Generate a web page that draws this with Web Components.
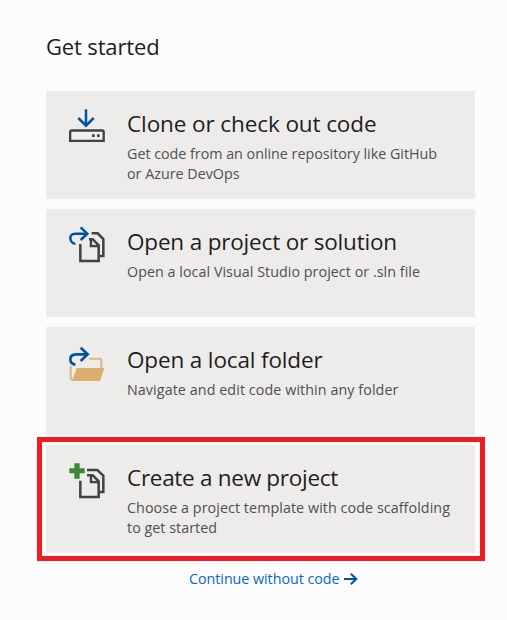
<!DOCTYPE html>
<html lang="en">
<head>
<meta charset="utf-8">
<title>Get started</title>
<style>
html,body{margin:0;background:#fcfcfc;font-family:"Open Sans","Noto Sans",sans-serif;color:#1e1e1e}
body{width:507px;height:620px;overflow:hidden}
</style>
</head>
<body>
<start-page></start-page>
<script>
/* One line of text whose letter spacing is adjusted to span a given width. */
class FitLine extends HTMLElement{
  connectedCallback(){
    const root=this.attachShadow({mode:'open'});
    root.innerHTML='<style>:host{display:block;white-space:nowrap}span{display:inline-block}</style><span><slot></slot></span>';
    const span=root.querySelector('span');
    const w=parseFloat(this.getAttribute('width'));
    const n=this.textContent.length;
    span.style.letterSpacing=((w-span.getBoundingClientRect().width)/n)+'px';
  }
}

const ICONS={
clone:`<svg viewBox="0 0 180 150"><g fill="none" stroke="#00539c" stroke-width="7.5"><path d="M78 28V76"/><path d="M55 54L78 77L101 54"/></g><path d="M30.5 122.5V96Q30.5 91.5 35 91.5H127Q131 91.5 131 96V122.5Z" fill="#f1f0ef" stroke="#424242" stroke-width="7"/><path d="M96 103h8v8h-8zM111 103h8v8h-8z" fill="#424242"/></svg>`,
open:`<svg viewBox="0 0 180 150"><g fill="none" stroke="#424242" stroke-width="7.5"><path d="M61 78V129H116V82L98 64H87"/><path d="M93 64V84H115"/><path d="M95 46H113L130 63V114H119"/></g><path d="M97 68L109 80H97Z" fill="#e4e3e2"/><g fill="none" stroke="#00539c" stroke-width="7.5"><path d="M62 28L82 47L62 66"/><path d="M80 47H46C34 47 30 55 31 61C32 70 38 77 46 77"/></g></svg>`,
folder:`<svg viewBox="0 -6 180 150"><path d="M88 62H120Q124 62 124 66V91" fill="none" stroke="#dcb67a" stroke-width="6"/><path d="M32 84V121Q32 126 39 126" fill="none" stroke="#dcb67a" stroke-width="6"/><path d="M50 90H133L120 129H36Z" fill="#dbaf6d"/><g fill="none" stroke="#00539c" stroke-width="8"><path d="M62 29L83 49L62 69"/><path d="M81 49H49C36 49 31 56 31 64C31 73 37 79 46 80"/></g></svg>`,
create:`<svg viewBox="0 -6 180 150"><g fill="none" stroke="#424242" stroke-width="7.5"><path d="M61 74V123H116V76L98 58H81"/><path d="M93 58V78H115"/><path d="M81 42H112L130 59V108H119"/></g><path d="M97 62L109 74H97Z" fill="#e4e3e2"/><path d="M43 22H59V37H74V52H59V68H43V52H28V37H43Z" fill="#388a34"/></svg>`
};
class ActionIcon extends HTMLElement{
  connectedCallback(){
    this.attachShadow({mode:'open'}).innerHTML='<style>:host{display:block;width:60px;height:50px}svg{display:block;width:60px;height:50px}</style>'+ICONS[this.getAttribute('name')];
  }
}

class ActionCard extends HTMLElement{
  connectedCallback(){
    this.attachShadow({mode:'open'}).innerHTML=`<style>
:host{display:flex;box-sizing:border-box;height:108px;background:#edecea;padding:9px 0 0 14px;gap:7px}
:host([highlighted]){position:relative}
:host([highlighted])::after{content:"";position:absolute;inset:-8px -10px -8px -9px;border:5px solid #ef1c24}
.copy{padding-top:8px}
.title{font-size:22.5px;line-height:32px;height:36px}
.desc{font-size:14.3px;line-height:20px;color:#505050}
</style>
<action-icon name="${this.getAttribute('icon')}"></action-icon>
<div class="copy"><div class="title"><slot name="title"></slot></div><div class="desc"><slot></slot></div></div>`;
  }
}

class StartPage extends HTMLElement{
  connectedCallback(){
    this.attachShadow({mode:'open'}).innerHTML=`<style>
:host{display:flex;flex-direction:column;box-sizing:border-box;height:620px;padding:30px 32px 0 46px}
h1{font-size:22px;line-height:32px;font-weight:400;margin:0 0 29px}
.cards{display:grid;gap:10px}
a{display:flex;align-items:center;gap:4px;margin:16px 0 0 143px;color:#0868cb;font-size:14.3px;line-height:20px;text-decoration:none}
a svg{width:14px;height:14px;display:block}
</style>
<h1><fit-line width="113.5">Get started</fit-line></h1>
<div class="cards">
<action-card icon="clone"><fit-line slot="title" width="249.5">Clone or check out code</fit-line><fit-line width="310">Get code from an online repository like GitHub</fit-line><fit-line width="112.5">or Azure DevOps</fit-line></action-card>
<action-card icon="open"><fit-line slot="title" width="270">Open a project or solution</fit-line><fit-line width="293">Open a local Visual Studio project or .sln file</fit-line></action-card>
<action-card icon="folder"><fit-line slot="title" width="195.5">Open a local folder</fit-line><fit-line width="271.5">Navigate and edit code within any folder</fit-line></action-card>
<action-card icon="create" highlighted><fit-line slot="title" width="211">Create a new project</fit-line><fit-line width="323">Choose a project template with code scaffolding</fit-line><fit-line width="90">to get started</fit-line></action-card>
</div>
<a href="#"><fit-line width="150.5">Continue without code</fit-line><svg viewBox="0 0 14 14"><path d="M0 7H12.5M6.8 1.8L12.3 7L6.8 12.2" fill="none" stroke="#00539c" stroke-width="2"/></svg></a>`;
    this.shadowRoot.querySelectorAll('.cards').forEach(c=>c.style.width='429px');
  }
}
customElements.define('action-icon',ActionIcon);
customElements.define('action-card',ActionCard);
customElements.define('start-page',StartPage);
customElements.define('fit-line',FitLine);
</script>
</body>
</html>
